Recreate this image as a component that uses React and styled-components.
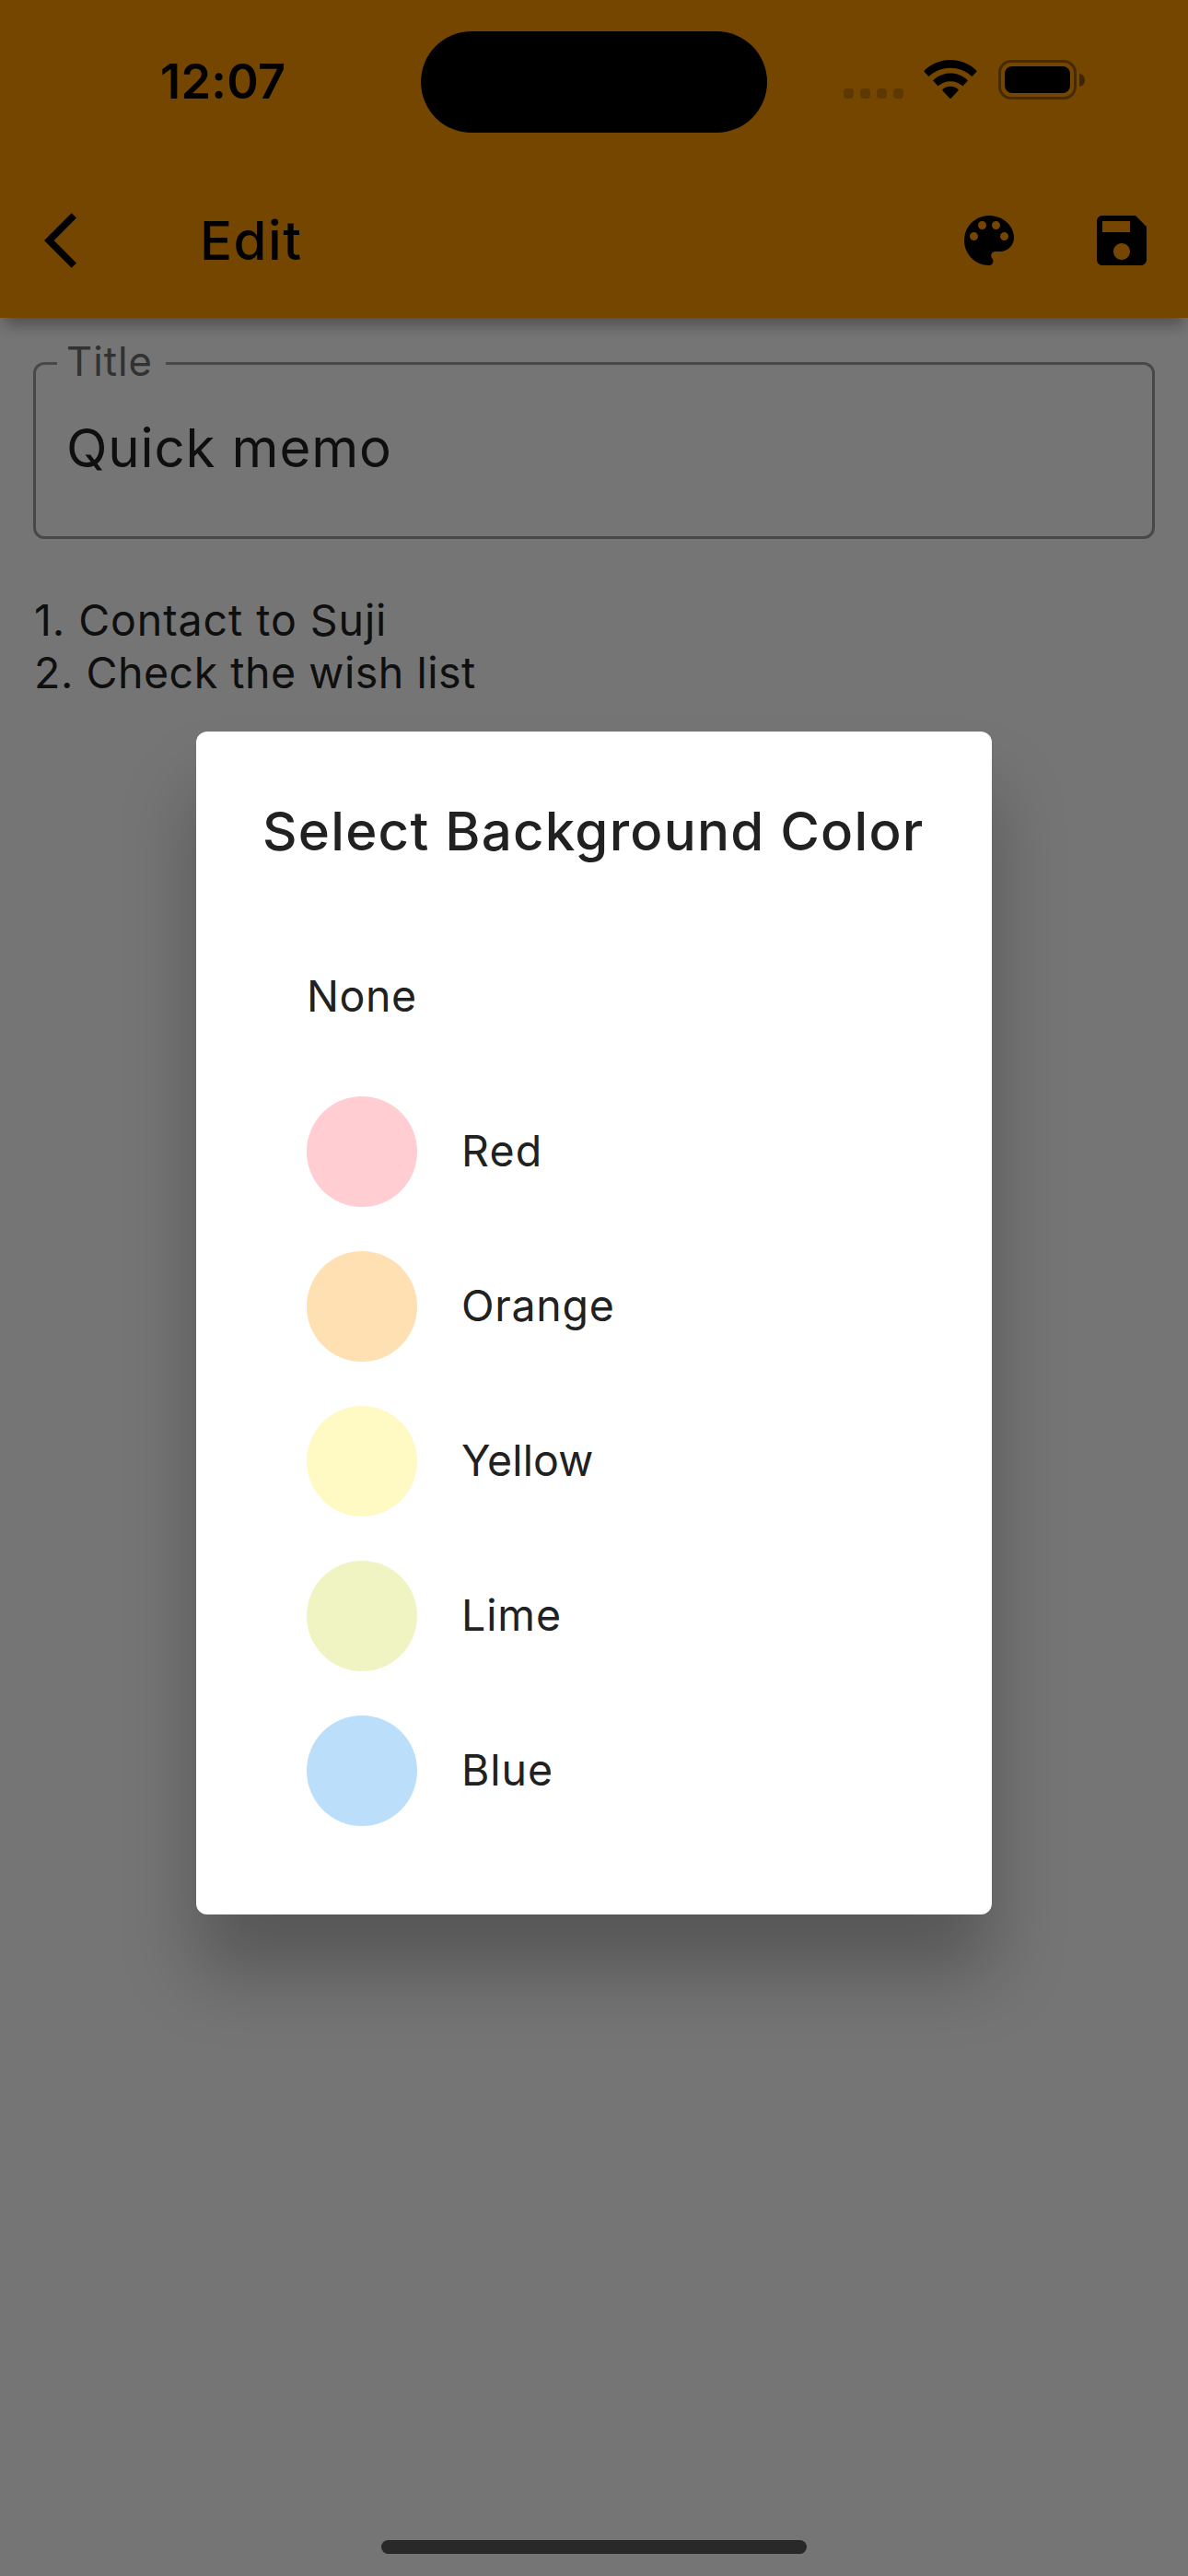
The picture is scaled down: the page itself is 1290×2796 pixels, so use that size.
import React from 'react';
import styled, { createGlobalStyle } from 'styled-components';

const GlobalStyle = createGlobalStyle`
  *, *::before, *::after { box-sizing: border-box; }
  html, body { margin: 0; padding: 0; background: #ffffff; }
`;

const Screen = styled.div`
  position: relative;
  width: 1290px;
  height: 2796px;
  overflow: hidden;
  display: flex;
  flex-direction: column;
  background: #ffffff;
  color: #212121;
  font-family: Inter, Roboto, 'Liberation Sans', sans-serif;
`;

const AppBar = styled.header`
  position: relative;
  flex: none;
  height: 345px;
  padding: 177px 0 0 48px;
  display: flex;
  align-items: center;
  background: #ff9900;
  color: #000000;
  box-shadow: 0 12px 16px -4px rgba(0, 0, 0, 0.32);
`;

const IconButton = styled.button`
  width: ${(p) => p.$width}px;
  height: 144px;
  padding: 0;
  border: 0;
  display: flex;
  align-items: center;
  justify-content: ${(p) => p.$align || 'center'};
  background: none;
  color: inherit;
`;

const Icon = styled.svg`
  display: block;
  flex: none;
  width: 72px;
  height: 72px;
  fill: currentColor;
`;

const AppBarTitle = styled.h1`
  flex: 1;
  margin: 0;
  padding-left: 1px;
  font-size: 58.2px;
  font-weight: 500;
  line-height: 72px;
  letter-spacing: 1.5px;
`;

const Editor = styled.main`
  flex: 1;
  padding: 23px 36px 0;
  display: flex;
  flex-direction: column;
`;

const Field = styled.fieldset`
  margin: 0;
  height: 217px;
  min-width: 0;
  padding: 0 33px 0 23px;
  border: 3px solid #9e9e9e;
  border-radius: 12px;
`;

const FieldLabel = styled.legend`
  width: 118px;
  padding: 1px 0 4px 10px;
  color: #6d6d6d;
  font-size: 43.6px;
  line-height: 48px;
  letter-spacing: 1px;
`;

const FieldValue = styled.div`
  padding: 29px 0 0 10px;
  font-size: 58.2px;
  line-height: 72px;
  letter-spacing: 0.84px;
`;

const Body = styled.div`
  margin-top: 60px;
  padding-left: 1px;
  font-size: 46.5px;
  line-height: 57px;
`;

const BodyLine = styled.p`
  margin: 0;
  white-space: nowrap;
  letter-spacing: ${(p) => p.$tracking}px;
`;

const Scrim = styled.div`
  position: absolute;
  inset: 0;
  padding: 177px 0 102px;
  display: flex;
  align-items: center;
  justify-content: center;
  background: rgba(0, 0, 0, 0.54);
`;

const Dialog = styled.section`
  width: 864px;
  border-radius: 12px;
  background: #ffffff;
  padding: 72px 72px;
  display: flex;
  flex-direction: column;
  gap: 60px;
  box-shadow: 0 64px 80px rgba(0, 0, 0, 0.26);
`;

const DialogTitle = styled.h2`
  margin: 0;
  font-size: 58.2px;
  font-weight: 500;
  line-height: 72px;
  letter-spacing: 1.25px;
  white-space: nowrap;
`;

const Options = styled.ul`
  margin: 0;
  padding: 0 48px;
  list-style: none;
`;

const Option = styled.li`
  height: 168px;
  display: flex;
  align-items: center;
  gap: 48px;
  font-size: 46.5px;
  line-height: 57px;
  letter-spacing: ${(p) => p.$tracking}px;
`;

const Swatch = styled.span`
  width: 120px;
  height: 120px;
  border-radius: 50%;
  background: ${(p) => p.$color};
`;

const StatusBar = styled.div`
  position: absolute;
  top: 0;
  left: 0;
  right: 0;
  height: 177px;
  display: grid;
  grid-template-columns: 457px 376px 1fr;
  align-items: start;
  color: #000000;
`;

const Clock = styled.div`
  padding: 56px 0 0 174px;
  font-size: 52.3px;
  font-weight: 600;
  line-height: 64px;
  letter-spacing: 0.3px;
`;

const Island = styled.div`
  margin-top: 33.5px;
  height: 110.5px;
  border-radius: 56px;
  background: #000000;
`;

const StatusIcons = styled.div`
  height: 43px;
  margin: 65px 112px 0 83px;
  display: flex;
  align-items: flex-end;
`;

const SignalDots = styled.div`
  display: flex;
  gap: 7px;
  padding-bottom: 1px;
`;

const SignalDot = styled.span`
  width: 11px;
  height: 11px;
  border-radius: 4px;
  background: rgba(0, 0, 0, 0.2);
`;

const WifiIcon = styled.svg`
  display: block;
  width: 58px;
  height: 43px;
  margin-left: 22px;
`;

const Battery = styled.div`
  margin-left: 23px;
  display: flex;
  align-items: center;
  gap: 3px;
`;

const BatteryCase = styled.div`
  width: 85px;
  height: 43px;
  padding: 4px;
  border: 3px solid rgba(0, 0, 0, 0.4);
  border-radius: 14px;
  display: flex;
`;

const BatteryCharge = styled.div`
  flex: 1;
  border-radius: 8px;
  background: #000000;
`;

const BatteryCap = styled.div`
  width: 5.5px;
  height: 14px;
  border-radius: 0 6px 6px 0 / 0 7px 7px 0;
  background: rgba(0, 0, 0, 0.45);
`;

const HomeIndicator = styled.div`
  position: absolute;
  left: 414px;
  bottom: 24px;
  width: 462px;
  height: 15px;
  border-radius: 8px;
  background: #292929;
`;

const lines = [
  { text: '1. Contact to Suji', tracking: 0.92 },
  { text: '2. Check the wish list', tracking: 0.53 },
];

const options = [
  { name: 'None', tracking: 0.54 },
  { name: 'Red', color: '#ffcdd2', tracking: 1.2 },
  { name: 'Orange', color: '#ffe0b2', tracking: 0.7 },
  { name: 'Yellow', color: '#fff9c4', tracking: 0.1 },
  { name: 'Lime', color: '#f0f4c3', tracking: 0.9 },
  { name: 'Blue', color: '#bbdefb', tracking: 0.9 },
];

function BackIcon() {
  return (
    <Icon viewBox="0 0 24 24">
      <path d="M11.67 3.87 9.9 2.1 0 12l9.9 9.9 1.77-1.77L3.54 12z" />
    </Icon>
  );
}

function PaletteIcon() {
  return (
    <Icon viewBox="0 0 24 24">
      <path d="M12 3c-4.97 0-9 4.03-9 9s4.03 9 9 9c.83 0 1.5-.67 1.5-1.5 0-.39-.15-.74-.39-1.01-.23-.26-.38-.61-.38-.99 0-.83.67-1.5 1.5-1.5H16c2.76 0 5-2.24 5-5 0-4.42-4.03-8-9-8zm-5.5 9c-.83 0-1.5-.67-1.5-1.5S5.67 9 6.5 9 8 9.67 8 10.5 7.33 12 6.5 12zm3-4C8.67 8 8 7.33 8 6.5S8.67 5 9.5 5s1.5.67 1.5 1.5S10.33 8 9.5 8zm5 0c-.83 0-1.5-.67-1.5-1.5S13.67 5 14.5 5s1.5.67 1.5 1.5S15.33 8 14.5 8zm3 4c-.83 0-1.5-.67-1.5-1.5S16.67 9 17.5 9s1.5.67 1.5 1.5-.67 1.5-1.5 1.5z" />
    </Icon>
  );
}

function SaveIcon() {
  return (
    <Icon viewBox="0 0 24 24">
      <path d="M17 3H5c-1.11 0-2 .9-2 2v14c0 1.1.89 2 2 2h14c1.1 0 2-.9 2-2V7l-4-4zm-5 16c-1.66 0-3-1.34-3-3s1.34-3 3-3 3 1.34 3 3-1.34 3-3 3zm3-10H5V5h10v4z" />
    </Icon>
  );
}

function Wifi() {
  return (
    <WifiIcon viewBox="0 0 58 43">
      <path d="M29 0C39.5 0 49.800 4.300 57.200 11.400Q58 12.200 57.200 13L53.200 17.400Q52.500 18.200 51.700 17.400C45.600 11.900 37.600 8.800 29 8.800S12.400 11.900 6.300 17.400Q5.500 18.200 4.800 17.400L.8 13Q0 12.200 .8 11.400C8.200 4.300 18.500 0 29 0Z" />
      <path d="M29 14.500C36 14.500 42.500 17.200 47.300 21.700Q48.100 22.500 47.300 23.300L43.100 27.800Q42.300 28.600 41.500 27.800C38.200 24.900 33.800 23.200 29 23.200S19.800 24.900 16.500 27.800Q15.700 28.600 14.900 27.800L10.700 23.300Q9.900 22.500 10.700 21.700C15.500 17.200 22 14.500 29 14.500Z" />
      <path d="M29 28.800C32.200 28.800 35.100 30 37.400 32Q38.200 32.700 37.400 33.500L29.700 41.700Q29 42.500 28.300 41.700L20.600 33.500Q19.800 32.700 20.600 32C22.900 30 25.800 28.800 29 28.800Z" />
    </WifiIcon>
  );
}

export default function App() {
  return (
    <Screen>
      <GlobalStyle />
      <AppBar>
        <IconButton $width={168} $align="flex-start" aria-label="Back">
          <BackIcon />
        </IconButton>
        <AppBarTitle>Edit</AppBarTitle>
        <IconButton $width={144} aria-label="Background color">
          <PaletteIcon />
        </IconButton>
        <IconButton $width={144} aria-label="Save">
          <SaveIcon />
        </IconButton>
      </AppBar>

      <Editor>
        <Field>
          <FieldLabel>Title</FieldLabel>
          <FieldValue>Quick memo</FieldValue>
        </Field>
        <Body>
          {lines.map((line) => (
            <BodyLine key={line.text} $tracking={line.tracking}>
              {line.text}
            </BodyLine>
          ))}
        </Body>
      </Editor>

      <Scrim>
        <Dialog role="dialog">
          <DialogTitle>Select Background Color</DialogTitle>
          <Options>
            {options.map((option) => (
              <Option key={option.name} $tracking={option.tracking}>
                {option.color && <Swatch $color={option.color} />}
                {option.name}
              </Option>
            ))}
          </Options>
        </Dialog>
      </Scrim>

      <StatusBar>
        <Clock>12:07</Clock>
        <Island />
        <StatusIcons>
          <SignalDots>
            <SignalDot />
            <SignalDot />
            <SignalDot />
            <SignalDot />
          </SignalDots>
          <Wifi />
          <Battery>
            <BatteryCase>
              <BatteryCharge />
            </BatteryCase>
            <BatteryCap />
          </Battery>
        </StatusIcons>
      </StatusBar>
      <HomeIndicator />
    </Screen>
  );
}
